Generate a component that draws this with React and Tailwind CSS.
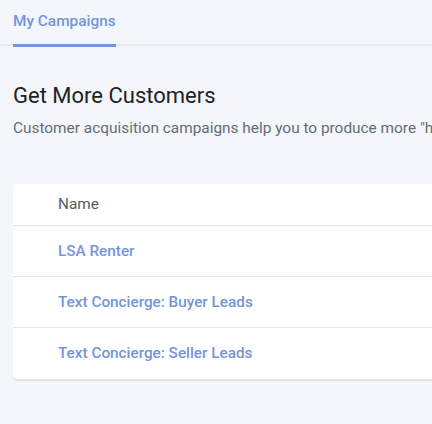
export default function App() {
  const rows = ['LSA Renter', 'Text Concierge: Buyer Leads', 'Text Concierge: Seller Leads'];
  return (
    <div className="w-[432px] h-[424px] overflow-hidden bg-[#f3f6fa] font-['Roboto',sans-serif]">
      <div className="relative h-[46px] border-b-2 border-[#e6e9ee] pl-[13px]">
        <div className="relative inline-block h-[46px] pt-[10px] text-[15.4px] font-medium text-[#7595d8]">
          My Campaigns
          <div className="absolute left-0 right-0 bottom-[-1px] h-[3px] bg-[#6f9ad9]" />
        </div>
      </div>
      <div className="pl-[13px] pt-[37px]">
        <h1 className="text-[22px] leading-[26px] text-[#222]">Get More Customers</h1>
        <p className="mt-[9px] whitespace-nowrap text-[15.4px] leading-[20px] text-[#666c75]">
          Customer acquisition campaigns help you to produce more "high quality leads" for your business.
        </p>
        <div className="mt-[46px] rounded-l-[4px] bg-white shadow-[0_1px_1px_rgba(0,0,0,0.08)] border-b border-[#e3e5e8]">
          <div className="h-[42px] flex items-center pl-[45px] text-[15.3px] text-[#555b63] border-b border-[#e3e5e8]">
            Name
          </div>
          {rows.map((r, i) => (
            <div
              key={r}
              className={`h-[51px] flex items-center pl-[45px] text-[15.3px] font-medium text-[#7595d8] ${i < rows.length - 1 ? 'border-b border-[#e3e5e8]' : ''}`}
            >
              {r}
            </div>
          ))}
        </div>
      </div>
    </div>
  );
}
